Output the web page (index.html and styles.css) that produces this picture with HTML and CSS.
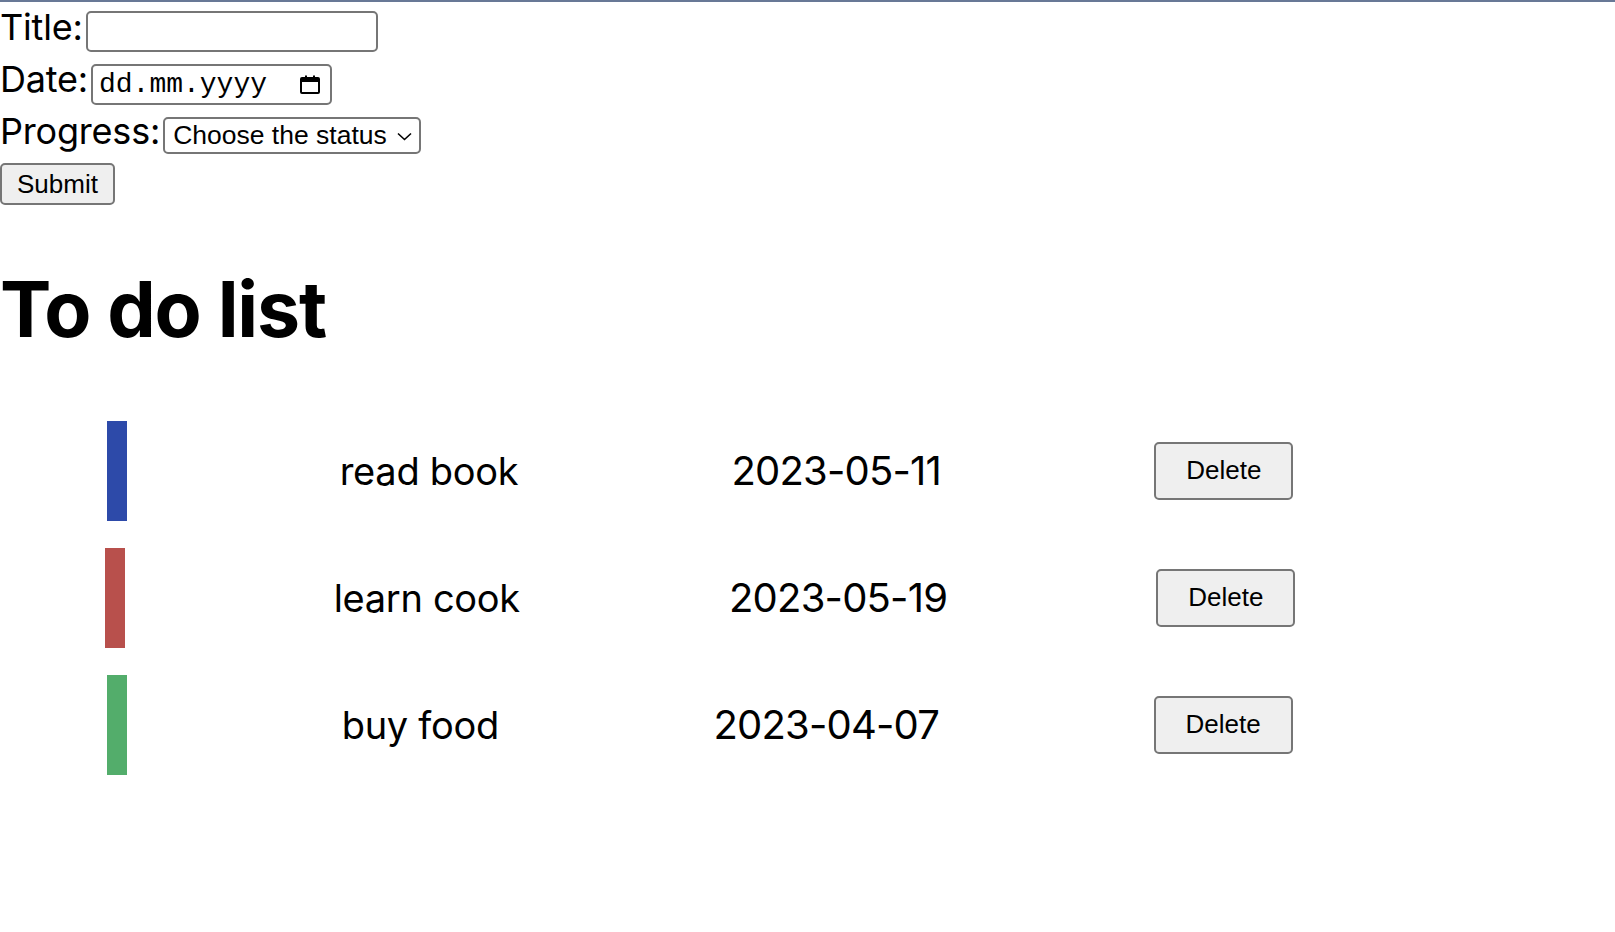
FILE: index.html
```html
<!DOCTYPE html>
<html lang="en">
<head>
<meta charset="utf-8">
<title>To do list</title>
<link rel="stylesheet" href="styles.css">
</head>
<body>
<div class="topline"></div>
<form class="form">
  <div class="field field-title"><label class="label" for="title">Title:</label><input class="text-input" id="title" type="text"></div>
  <div class="field field-date"><label class="label">Date:</label><span class="date-box"><span class="date-text">dd.mm.yyyy</span><svg class="cal" width="20" height="19" viewBox="0 0 20 19"><rect x="1" y="3" width="18" height="15" fill="none" stroke="#000" stroke-width="2" rx="1"/><rect x="1" y="3" width="18" height="4" fill="#000"/><rect x="5" y="0.5" width="2" height="3" fill="#000"/><rect x="13" y="0.5" width="2" height="3" fill="#000"/></svg></span></div>
  <div class="field field-progress"><label class="label" for="progress">Progress:</label><span class="select-wrap"><select class="select" id="progress"><option>Choose the status</option><option>To do</option><option>In progress</option><option>Done</option></select><svg class="chev" width="15" height="9" viewBox="0 0 15 9"><path d="M1 1.5 L7.5 7.5 L14 1.5" fill="none" stroke="#000" stroke-width="1.6"/></svg></span></div>
  <button class="submit" type="button">Submit</button>
</form>
<h1 class="heading">To do list</h1>
<ul class="list">
  <li class="item"><span class="bar bar-blue"></span><p class="name">read book</p><p class="date">2023-05-11</p><button class="del" type="button">Delete</button></li>
  <li class="item"><span class="bar bar-red"></span><p class="name">learn cook</p><p class="date">2023-05-19</p><button class="del" type="button">Delete</button></li>
  <li class="item"><span class="bar bar-green"></span><p class="name">buy food</p><p class="date">2023-04-07</p><button class="del" type="button">Delete</button></li>
</ul>
</body>
</html>
```
FILE: styles.css
```css
html, body {
  margin: 0;
  padding: 0;
  background: #fff;
}
body {
  font-family: Inter, "Liberation Sans", sans-serif;
  color: #000;
}
.topline {
  height: 2px;
  background: #687896;
}
.form {
  margin: 0;
  padding: 3px 0 0 0;
}
.field {
  display: flex;
  align-items: baseline;
}
.label {
  font-family: Inter, sans-serif;
  font-size: 36px;
  line-height: 44px;
  letter-spacing: -0.2px;
}
.field-title { height: 52px; }
.field-date { height: 52px; }
.field-progress { height: 54px; }
.text-input {
  box-sizing: border-box;
  width: 292px;
  height: 41px;
  margin: 0 0 0 3px;
  border: 2px solid #767676;
  border-radius: 5px;
  font-family: "Liberation Sans", Arial, sans-serif;
  font-size: 26px;
  padding: 0 6px;
  background: #fff;
}
.date-box {
  box-sizing: border-box;
  display: inline-flex;
  align-items: center;
  justify-content: space-between;
  width: 241px;
  height: 41px;
  margin-left: 3px;
  padding: 0 10px 0 6px;
  border: 2px solid #767676;
  border-radius: 5px;
  font-family: "Liberation Mono", "Courier New", monospace;
  font-size: 28px;
  line-height: 37px;
}
.cal {
  display: block;
}
.select-wrap {
  position: relative;
  display: inline-block;
  margin-left: 3px;
}
.select {
  appearance: none;
  -webkit-appearance: none;
  box-sizing: border-box;
  width: 258px;
  height: 37px;
  margin: 0;
  padding: 0 0 0 8px;
  border: 2px solid #767676;
  border-radius: 5px;
  background: #fff;
  color: #000;
  font-family: "Liberation Sans", Arial, sans-serif;
  font-size: 26.5px;
  line-height: 33px;
}
.chev {
  position: absolute;
  right: 9px;
  top: 15px;
  pointer-events: none;
}
.submit {
  box-sizing: border-box;
  display: block;
  height: 42px;
  margin: 0;
  padding: 0 15px;
  border: 2px solid #767676;
  border-radius: 5px;
  background: #efefef;
  color: #000;
  font-family: "Liberation Sans", Arial, sans-serif;
  font-size: 26px;
}
.heading {
  margin: 57px 0 0 0;
  font-family: Inter, sans-serif;
  font-weight: 700;
  font-size: 77px;
  line-height: 94px;
  letter-spacing: -1.2px;
}
.list {
  list-style: none;
  margin: 51px 0 0 0;
  padding: 0;
}
.item {
  display: flex;
  align-items: center;
  justify-content: space-around;
  width: 1400px;
  height: 127px;
}
.bar {
  display: block;
  width: 20px;
  height: 100px;
}
.bar-blue { background: #2d4aa9; }
.bar-red { background: #b8504c; }
.bar-green { background: #53ad6b; }
.name, .date {
  margin: 0;
  font-family: Inter, sans-serif;
  font-size: 38px;
  letter-spacing: -0.3px;
}
.date {
  font-size: 40px;
  letter-spacing: -0.8px;
}
.del {
  box-sizing: border-box;
  height: 58px;
  margin: 0;
  padding: 0 30px;
  border: 2px solid #767676;
  border-radius: 5px;
  background: #efefef;
  color: #000;
  font-family: "Liberation Sans", Arial, sans-serif;
  font-size: 26px;
}
```
